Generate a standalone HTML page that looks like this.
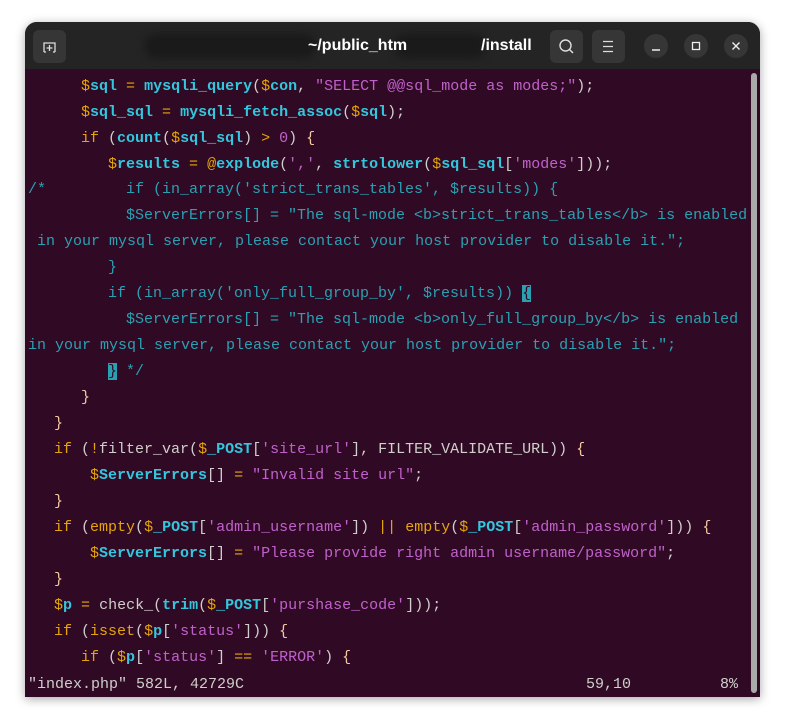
<!DOCTYPE html>
<html><head><meta charset="utf-8"><style>
html,body{margin:0;padding:0;width:786px;height:725px;background:#fff;overflow:hidden}
.win{position:absolute;left:25px;top:22px;width:735px;height:675px;border-radius:12px 12px 0 0;overflow:hidden;background:#300a24;box-shadow:0 2px 10px rgba(0,0,0,.35)}
.tb{position:absolute;left:0;top:0;width:735px;height:47px;background:#242424}
.btn{position:absolute;top:8px;width:33px;height:33px;border-radius:6px;background:#363636}
.cb{position:absolute;top:12px;width:24px;height:24px;border-radius:12px;background:#363636;color:#eee;font:13px "Liberation Sans",sans-serif;text-align:center;line-height:24px}
.tt{position:absolute;top:15px;font:bold 16px "Liberation Sans",sans-serif;color:#fff}
.code{position:absolute;left:0;top:0;font:15px/26px "Liberation Mono",monospace;white-space:pre;color:#d0cfcc}
.l{position:absolute;white-space:pre}
.y{color:#e5a50a}.c{color:#33c7de;font-weight:bold}.p{color:#c061cb}.k{color:#e5a50a}.m{color:#2aa1b3}.f{color:#33c7de;font-weight:bold}.o{color:#f5c9a0}
.cur{background:#2aa1b3;color:#300a24}
</style></head><body>
<div class="win">
<div class="tb">
 <div class="btn" style="left:8px"><svg width="33" height="33"><path d="M11 22V13h11v9M11 22h2M22 22h-2M16.5 15v6M13.5 18h6" stroke="#ddd" stroke-width="1.3" fill="none"/></svg></div>
 <div style="position:absolute;left:120px;top:12px;width:170px;height:24px;background:#1a1a1a;border-radius:10px;filter:blur(4px)"></div>
 <div style="position:absolute;left:370px;top:12px;width:90px;height:24px;background:#1a1a1a;border-radius:10px;filter:blur(4px)"></div>
 <div class="tt" style="left:283px">~/public_htm</div>
 <div class="tt" style="left:456px">/install</div>
 <div class="btn" style="left:525px"><svg width="33" height="33"><circle cx="15.5" cy="15.5" r="5.5" stroke="#ddd" stroke-width="1.4" fill="none"/><path d="M19.5 19.5l3.5 3.5" stroke="#ddd" stroke-width="1.5"/></svg></div>
 <div class="btn" style="left:567px"><svg width="33" height="33"><path d="M11 11.5h10M11 16.5h10M11 21.5h10" stroke="#ddd" stroke-width="1.3"/></svg></div>
 <div class="cb" style="left:619px"><svg width="24" height="24"><path d="M8 16h8" stroke="#eee" stroke-width="1.4"/></svg></div>
 <div class="cb" style="left:659px"><svg width="24" height="24"><rect x="8.5" y="8.5" width="7" height="7" stroke="#eee" stroke-width="1.3" fill="none"/></svg></div>
 <div class="cb" style="left:699px"><svg width="24" height="24"><path d="M8.5 8.5l7 7M15.5 8.5l-7 7" stroke="#eee" stroke-width="1.4"/></svg></div>
</div>
<div style="position:absolute;left:726px;top:51px;width:6px;height:620px;border-radius:3px;background:#aaa"></div>
<div class="code">
<div class="l" style="left:56px;top:52px"><span class="y">$</span><span class="c">sql</span> <span class="y">=</span> <span class="f">mysqli_query</span>(<span class="y">$</span><span class="c">con</span>, <span class="p">"SELECT @@sql_mode as modes;"</span>);</div>
<div class="l" style="left:56px;top:78px"><span class="y">$</span><span class="c">sql_sql</span> <span class="y">=</span> <span class="f">mysqli_fetch_assoc</span>(<span class="y">$</span><span class="c">sql</span>);</div>
<div class="l" style="left:56px;top:104px"><span class="k">if</span> (<span class="f">count</span>(<span class="y">$</span><span class="c">sql_sql</span>) <span class="y">&gt;</span> <span class="p">0</span>) <span class="o">{</span></div>
<div class="l" style="left:83px;top:130px"><span class="y">$</span><span class="c">results</span> <span class="y">=</span> <span class="y">@</span><span class="f">explode</span>(<span class="p">','</span>, <span class="f">strtolower</span>(<span class="y">$</span><span class="c">sql_sql</span>[<span class="p">'modes'</span>]));</div>
<div class="l m" style="left:3px;top:155px">/*</div>
<div class="l m" style="left:101px;top:155px">if (in_array('strict_trans_tables', $results)) {</div>
<div class="l m" style="left:101px;top:181px">$ServerErrors[] = "The sql-mode &lt;b&gt;strict_trans_tables&lt;/b&gt; is enabled</div>
<div class="l m" style="left:3px;top:207px"> in your mysql server, please contact your host provider to disable it.";</div>
<div class="l m" style="left:83px;top:233px">}</div>
<div class="l m" style="left:83px;top:259px">if (in_array('only_full_group_by', $results)) <span class="cur">{</span></div>
<div class="l m" style="left:101px;top:285px">$ServerErrors[] = "The sql-mode &lt;b&gt;only_full_group_by&lt;/b&gt; is enabled</div>
<div class="l m" style="left:3px;top:311px">in your mysql server, please contact your host provider to disable it.";</div>
<div class="l m" style="left:83px;top:337px"><span class="cur">}</span> */</div>
<div class="l" style="left:56px;top:363px"><span class="o">}</span></div>
<div class="l" style="left:29px;top:389px"><span class="o">}</span></div>
<div class="l" style="left:29px;top:415px"><span class="k">if</span> (<span class="y">!</span>filter_var(<span class="y">$</span><span class="c">_POST</span>[<span class="p">'site_url'</span>], FILTER_VALIDATE_URL)) <span class="o">{</span></div>
<div class="l" style="left:65px;top:441px"><span class="y">$</span><span class="c">ServerErrors</span>[] <span class="y">=</span> <span class="p">"Invalid site url"</span>;</div>
<div class="l" style="left:29px;top:467px"><span class="o">}</span></div>
<div class="l" style="left:29px;top:493px"><span class="k">if</span> (<span class="k">empty</span>(<span class="y">$</span><span class="c">_POST</span>[<span class="p">'admin_username'</span>]) <span class="y">||</span> <span class="k">empty</span>(<span class="y">$</span><span class="c">_POST</span>[<span class="p">'admin_password'</span>])) <span class="o">{</span></div>
<div class="l" style="left:65px;top:519px"><span class="y">$</span><span class="c">ServerErrors</span>[] <span class="y">=</span> <span class="p">"Please provide right admin username/password"</span>;</div>
<div class="l" style="left:29px;top:545px"><span class="o">}</span></div>
<div class="l" style="left:29px;top:571px"><span class="y">$</span><span class="c">p</span> <span class="y">=</span> check_(<span class="f">trim</span>(<span class="y">$</span><span class="c">_POST</span>[<span class="p">'purshase_code'</span>]));</div>
<div class="l" style="left:29px;top:597px"><span class="k">if</span> (<span class="k">isset</span>(<span class="y">$</span><span class="c">p</span>[<span class="p">'status'</span>])) <span class="o">{</span></div>
<div class="l" style="left:56px;top:623px"><span class="k">if</span> (<span class="y">$</span><span class="c">p</span>[<span class="p">'status'</span>] <span class="y">==</span> <span class="p">'ERROR'</span>) <span class="o">{</span></div>
<div class="l" style="left:3px;top:650px">"index.php" 582L, 42729C</div>
<div class="l" style="left:561px;top:650px">59,10</div>
<div class="l" style="left:695px;top:650px">8%</div>
</div>
</div>
</body></html>
